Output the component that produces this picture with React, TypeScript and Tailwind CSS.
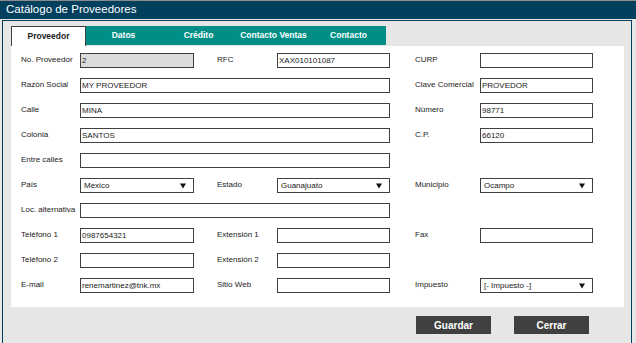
import React from "react";

const tabs = ["Datos", "Crédito", "Contacto Ventas", "Contacto"];

function Label({ text, pad = "" }: { text: string; pad?: string }) {
  return (
    <div className={`flex items-center whitespace-nowrap text-[8px] text-[#222] pb-[2px] ${pad}`}>
      {text}
    </div>
  );
}

function Field({ value = "", span = "", gray = false }: { value?: string; span?: string; gray?: boolean }) {
  return (
    <input
      readOnly
      value={value}
      className={`h-[15px] w-full border border-[#404040] px-px text-[8px] text-[#1a1a1a] outline-none ${
        gray ? "bg-[#dcdcdc]" : "bg-white"
      } ${span}`}
    />
  );
}

function Select({ value }: { value: string }) {
  return (
    <div className="flex h-[15px] w-full items-center justify-between border border-[#404040] bg-white pl-[3px] pr-[7px] text-[8px] text-[#1a1a1a]">
      <span>{value}</span>
      <svg width="6" height="6" viewBox="0 0 6 6">
        <polygon points="0,0.5 6,0.5 3,5.5" fill="#111" />
      </svg>
    </div>
  );
}

export default function App() {
  return (
    <div className="h-[343px] w-[636px] overflow-hidden bg-[#e6e6e6] font-['Liberation_Sans',Arial,sans-serif]">
      {/* title bar */}
      <div className="flex h-[19px] items-center border-t border-[#8c8c8c] bg-[#03405e] pl-[6px] text-[11.5px] text-white">
        Catálogo de Proveedores
      </div>

      <div className="ml-[2px] mt-px h-[330px] w-[630px] border-l border-r border-t border-[#03405e] pl-[8px] pr-[7px] pt-[5px]">
        {/* tabs */}
        <div className="flex h-[20px]">
          <div className="flex w-[75px] items-center justify-center border border-b-0 border-[#404040] bg-white text-[8.5px] font-bold text-[#222]">
            Proveedor
          </div>
          {tabs.map((t) => (
            <div
              key={t}
              className="flex h-[19px] w-[75px] items-center justify-center bg-[#008f87] text-[8.5px] font-bold text-white"
            >
              {t}
            </div>
          ))}
        </div>

        {/* form */}
        <div className="h-[261px] bg-white pl-[10px] pt-[7px]">
          <div className="grid grid-cols-[59px_114px_83px_113px_90px_113px] auto-rows-[15px] gap-y-[10px]">
            <Label text="No. Proveedor" />
            <Field value="2" gray />
            <Label text="RFC" pad="pl-[23px]" />
            <Field value="XAX010101087" />
            <Label text="CURP" pad="pl-[25px]" />
            <Field />

            <Label text="Razón Social" />
            <Field value="MY PROVEEDOR" span="col-span-3 w-[309px]" />
            <Label text="Clave Comercial" pad="pl-[25px]" />
            <Field value="PROVEDOR" />

            <Label text="Calle" />
            <Field value="MINA" span="col-span-3 w-[309px]" />
            <Label text="Número" pad="pl-[25px]" />
            <Field value="98771" />

            <Label text="Colonia" />
            <Field value="SANTOS" span="col-span-3 w-[309px]" />
            <Label text="C.P." pad="pl-[25px]" />
            <Field value="66120" />

            <Label text="Entre calles" />
            <Field span="col-span-3 w-[309px]" />
            <div className="col-span-2" />

            <Label text="País" />
            <Select value="Mexico" />
            <Label text="Estado" pad="pl-[23px]" />
            <Select value="Guanajuato" />
            <Label text="Municipio" pad="pl-[25px]" />
            <Select value="Ocampo" />

            <Label text="Loc. alternativa" />
            <Field span="col-span-3 w-[309px]" />
            <div className="col-span-2" />

            <Label text="Teléfono 1" />
            <Field value="0987654321" />
            <Label text="Extensión 1" pad="pl-[23px]" />
            <Field />
            <Label text="Fax" pad="pl-[25px]" />
            <Field />

            <Label text="Teléfono 2" />
            <Field />
            <Label text="Extensión 2" pad="pl-[23px]" />
            <Field />
            <div className="col-span-2" />

            <Label text="E-mail" />
            <Field value="renemartinez@tnk.mx" />
            <Label text="Sitio Web" pad="pl-[23px]" />
            <Field />
            <Label text="Impuesto" pad="pl-[25px]" />
            <Select value="[- Impuesto -]" />
          </div>
        </div>

        {/* actions */}
        <div className="mt-[9px] flex justify-end gap-[23px] pr-[35px]">
          <button className="h-[18px] w-[75px] bg-[#404040] text-[10px] font-bold text-white">Guardar</button>
          <button className="h-[18px] w-[75px] bg-[#404040] text-[10px] font-bold text-white">Cerrar</button>
        </div>
      </div>
    </div>
  );
}
